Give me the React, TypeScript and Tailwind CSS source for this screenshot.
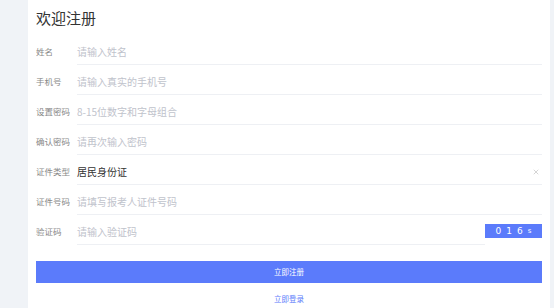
import { X } from 'lucide-react';

const fields = [
  { label: '姓名', placeholder: '请输入姓名' },
  { label: '手机号', placeholder: '请输入真实的手机号' },
  { label: '设置密码', placeholder: '8-15位数字和字母组合' },
  { label: '确认密码', placeholder: '请再次输入密码' },
];

const font = { fontFamily: '"Noto Sans CJK SC", "Noto Sans", sans-serif' };

function Row({ label, children }: { label: string; children: React.ReactNode }) {
  return (
    <div className="flex h-[30px] items-stretch">
      <div className="w-[41px] shrink-0 flex items-center pt-[3px] text-[8.5px] text-[#888]">{label}</div>
      {children}
    </div>
  );
}

const inputCls =
  'flex-1 min-w-0 border-b border-[#eef0f4] bg-transparent pt-[4px] text-[10px] outline-none placeholder:text-[#bfc3cc]';

export default function App() {
  return (
    <div className="flex h-[308px] w-[554px] bg-[#f0f3f7] overflow-hidden" style={font}>
      <div className="w-[28px] shrink-0" />
      <div className="w-[522px] bg-white pl-[8px] pr-[8px]">
        <h1 className="h-[35px] pt-[8px] text-[15px] leading-[20px] text-[#333]">欢迎注册</h1>

        {fields.map((f) => (
          <Row key={f.label} label={f.label}>
            <input readOnly placeholder={f.placeholder} className={inputCls} />
          </Row>
        ))}

        <Row label="证件类型">
          <div className="flex-1 flex items-center justify-between border-b border-[#eef0f4] pt-[4px] pr-[2px]">
            <span className="text-[10px] text-[#333]">居民身份证</span>
            <X className="w-[8px] h-[8px] text-[#aaa]" strokeWidth={1.5} />
          </div>
        </Row>

        <Row label="证件号码">
          <input readOnly placeholder="请填写报考人证件号码" className={inputCls} />
        </Row>

        <Row label="验证码">
          <input readOnly placeholder="请输入验证码" className={inputCls} />
          <div className="w-[57px] shrink-0 flex items-center">
            <div
              className="mt-[2px] h-[14px] w-full bg-[#5b7bfb] flex items-center justify-center gap-[5px] text-white text-[9px] leading-none"
              style={{ fontFamily: '"DejaVu Sans", sans-serif' }}
            >
              <span>0</span>
              <span>1</span>
              <span>6</span>
              <span className="text-[7px]">s</span>
            </div>
          </div>
        </Row>

        <button className="mt-[16px] h-[22px] w-full bg-[#5b7bfb] text-white text-[7.5px] flex items-center justify-center">
          立即注册
        </button>
        <div className="mt-[10px] text-center text-[7.5px] text-[#5b7bfb]">立即登录</div>
      </div>
      <div className="flex-1" />
    </div>
  );
}
